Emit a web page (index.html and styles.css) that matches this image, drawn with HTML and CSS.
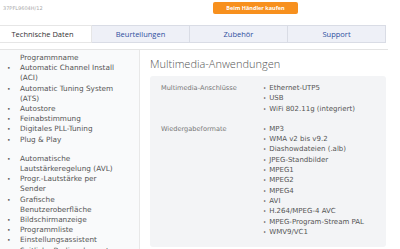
FILE: index.html
```html
<!DOCTYPE html>
<html lang="de">
 <head>
  <meta charset="utf-8">
  <link rel="stylesheet" href="styles.css">
 </head>
 <body>

  <div id="top">
    <span class="model">37PFL9604H/12</span>
    <button class="buy">Beim Händler kaufen</button>
  </div>

  <div id="tabs">
    <div class="tab active">Technische Daten</div>
    <div class="tab">Beurteilungen</div>
    <div class="tab">Zubehör</div>
    <div class="tab">Support</div>
  </div>

  <div id="content">
    <div id="sidebar">
      <ul class="list">
        <li class="cont">Programmname</li>
        <li>Automatic Channel Install (ACI)</li>
        <li>Automatic Tuning System (ATS)</li>
        <li>Autostore</li>
        <li>Feinabstimmung</li>
        <li>Digitales PLL-Tuning</li>
        <li>Plug &amp; Play</li>
      </ul>
      <ul class="list">
        <li>Automatische Lautstärkeregelung (AVL)</li>
        <li>Progr.-Lautstärke per Sender</li>
        <li>Grafische Benutzeroberfläche</li>
        <li>Bildschirmanzeige</li>
        <li>Programmliste</li>
        <li>Einstellungsassistent</li>
        <li>Seitliche Bedienelemente</li>
      </ul>
    </div>

    <div id="main">
      <h2>Multimedia-Anwendungen</h2>
      <div class="specs">
        <div class="spec">
          <div class="label">Multimedia-Anschlüsse</div>
          <ul class="values">
            <li>Ethernet-UTP5</li>
            <li>USB</li>
            <li>WiFi 802.11g (integriert)</li>
          </ul>
        </div>
        <div class="spec">
          <div class="label">Wiedergabeformate</div>
          <ul class="values">
            <li>MP3</li>
            <li>WMA v2 bis v9.2</li>
            <li>Diashowdateien (.alb)</li>
            <li>JPEG-Standbilder</li>
            <li>MPEG1</li>
            <li>MPEG2</li>
            <li>MPEG4</li>
            <li>AVI</li>
            <li>H.264/MPEG-4 AVC</li>
            <li>MPEG-Program-Stream PAL</li>
            <li>WMV9/VC1</li>
          </ul>
        </div>
      </div>
    </div>
  </div>

 </body>
</html>
```

FILE: styles.css
```css
*{box-sizing:border-box;margin:0;padding:0}
html{background:#fff}
body{width:400px;height:249px;overflow:hidden;font-family:"DejaVu Sans",Verdana,sans-serif;color:#444}
ul{list-style:none}
#top{height:18px;display:flex;align-items:flex-start}
.model{font-size:5px;color:#aaa;margin:5px 0 0 3px;width:210px}
.buy{margin-top:2px;width:85px;height:12px;border:0;border-radius:2px;background:#f7901e;color:#fff;font:bold 5.5px "Open Sans",sans-serif}
#tabs{display:flex;margin:7px 0 0 -6px;height:18px}
.tab{width:98px;display:flex;align-items:center;justify-content:center;font:7.5px "Open Sans",sans-serif;color:#2d4f9e;background:#eef0f7;border:1px solid #d9dce5;border-left:0}
.tab.active{background:#fff;color:#333;border-color:#e6e6e6}
#content{margin-top:6px;width:388px;border-top:1px solid #e4e4e4;display:flex;height:200px}
#sidebar{width:140px;background:#f9fafb;border-right:1px solid #e8e8e8;padding:3px 20px 0 7px;font-size:7.3px;line-height:10.2px;color:#555}
.list{margin-bottom:9px}
.list li{padding-left:13px;position:relative}
.list li::before{content:"•";position:absolute;left:0;font-size:6px}
.list li.cont::before{content:none}
#main{flex:1;padding:6px 0 0 10px}
h2{font:300 11px "Open Sans",sans-serif;color:#555;height:20px}
.specs{background:#f3f4f6;border-radius:3px;padding:7px 0 10px 11px;width:236px}
.spec{display:flex;margin-bottom:10px}
.spec:last-child{margin-bottom:0}
.label{width:102px;font-size:6.6px;line-height:10.3px;color:#777}
.values{font-size:7px;line-height:10.3px;color:#555}
.values li::before{content:"•";font-size:5.5px;margin-right:3px}
```
